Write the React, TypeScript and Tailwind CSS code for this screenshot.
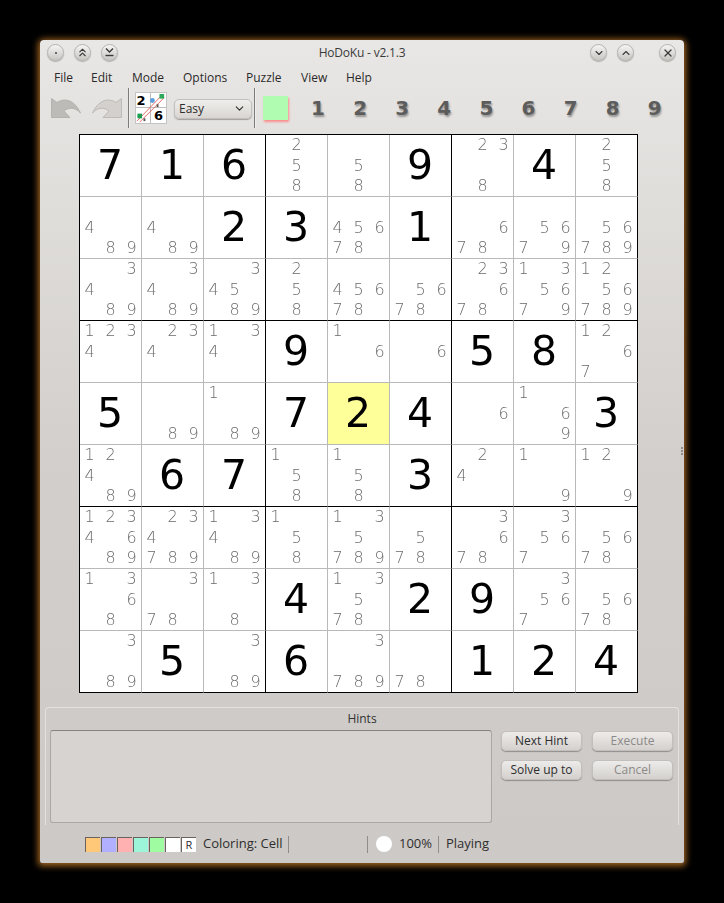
import { ChevronDown, ChevronUp, ChevronsUp, X } from "lucide-react";

const board: (number | number[])[][] = [
  [7, 1, 6, [2, 5, 8], [5, 8], 9, [2, 3, 8], 4, [2, 5, 8]],
  [[4, 8, 9], [4, 8, 9], 2, 3, [4, 5, 6, 7, 8], 1, [6, 7, 8], [5, 6, 7, 9], [5, 6, 7, 8, 9]],
  [[3, 4, 8, 9], [3, 4, 8, 9], [3, 4, 5, 8, 9], [2, 5, 8], [4, 5, 6, 7, 8], [5, 6, 7, 8], [2, 3, 6, 7, 8], [1, 3, 5, 6, 7, 9], [1, 2, 5, 6, 7, 8, 9]],
  [[1, 2, 3, 4], [2, 3, 4], [1, 3, 4], 9, [1, 6], [6], 5, 8, [1, 2, 6, 7]],
  [5, [8, 9], [1, 8, 9], 7, 2, 4, [6], [1, 6, 9], 3],
  [[1, 2, 4, 8, 9], 6, 7, [1, 5, 8], [1, 5, 8], 3, [2, 4], [1, 9], [1, 2, 9]],
  [[1, 2, 3, 4, 6, 8, 9], [2, 3, 4, 7, 8, 9], [1, 3, 4, 8, 9], [1, 5, 8], [1, 3, 5, 7, 8, 9], [5, 7, 8], [3, 6, 7, 8], [3, 5, 6, 7], [5, 6, 7, 8]],
  [[1, 3, 6, 8], [3, 7, 8], [1, 3, 8], 4, [1, 3, 5, 7, 8], 2, 9, [3, 5, 6, 7], [5, 6, 7, 8]],
  [[3, 8, 9], 5, [3, 8, 9], 6, [3, 7, 8, 9], [7, 8], 1, 2, 4],
];

const digits = [1, 2, 3, 4, 5, 6, 7, 8, 9];
const menus = [
  { label: "File", w: "w-[37px]" },
  { label: "Edit", w: "w-[41px]" },
  { label: "Mode", w: "w-[51px]" },
  { label: "Options", w: "w-[63px]" },
  { label: "Puzzle", w: "w-[55px]" },
  { label: "View", w: "w-[45px]" },
  { label: "Help", w: "w-[40px]" },
];
const swatches = ["bg-[#ffc878]", "bg-[#b0b0ff]", "bg-[#ffb0b0]", "bg-[#9cf5d8]", "bg-[#a0fca0]", "bg-white"];

function TitleButton({ children }: { children?: React.ReactNode }) {
  return (
    <div className="w-[17px] h-[17px] rounded-full flex items-center justify-center bg-gradient-to-b from-[#f6f5f4] to-[#c9c6c3] border border-[#b5b2af] shadow-[0_1px_1px_rgba(0,0,0,0.25)] text-[#3a3a3a]">
      {children}
    </div>
  );
}

function ArrowIcon({ flip }: { flip?: boolean }) {
  return (
    <svg width="30" height="20" viewBox="0 0 30 20" className={flip ? "-scale-x-100" : ""}>
      <path
        d="M0.5 0.5 L6 4.5 C11 1 22 -1 29.5 15 C24 9 18 9 13 13 L19 19.5 L0.5 19.5 Z"
        fill={flip ? "#d3d0cd" : "#bdbbb8"}
        stroke={flip ? "#bdbab7" : "#b5b3b0"}
        strokeWidth="1"
      />
    </svg>
  );
}

function LogoIcon() {
  return (
    <div className="relative w-8 h-8 bg-white grid grid-cols-2 grid-rows-2 border border-[#c4c4c4] shrink-0">
      <span className="flex items-center justify-center text-[13px] font-bold leading-none font-['DejaVu_Sans',sans-serif] text-black border-r border-b border-[#bdbdbd] pr-1">2</span>
      <span className="border-b border-[#bdbdbd]" />
      <span className="border-r border-[#bdbdbd]" />
      <span className="flex items-center justify-center text-[13px] font-bold leading-none font-['DejaVu_Sans',sans-serif] text-black">6</span>
      <svg viewBox="0 0 32 32" className="absolute inset-0 w-full h-full">
        <path d="M1 30 L27 3 M4 31 L30 5" stroke="#e0554f" strokeWidth="0.9" />
        <rect x="25" y="1" width="5" height="5" fill="#2ea85a" />
        <circle cx="17.5" cy="8" r="2.6" fill="#5a9fe0" />
        <rect x="1.5" y="22" width="5" height="5" fill="#1c9c50" />
        <rect x="22" y="12" width="2" height="3" fill="#555" />
        <rect x="8" y="27" width="2" height="3" fill="#555" />
      </svg>
    </div>
  );
}

function Separator() {
  return <div className="w-px h-10 bg-[#7d7a78] border-r border-[#eeeeee] box-content shrink-0" />;
}

function PushButton({ label, disabled }: { label: string; disabled?: boolean }) {
  return (
    <button className={`w-[81px] h-5 rounded-[5px] text-xs leading-none bg-gradient-to-b from-[#eeecea] to-[#d3d0cd] border border-[#c2bfbc] shadow-[0_1px_1px_rgba(0,0,0,0.3)] ${disabled ? "text-[#8c8a88]" : "text-[#2e2e2e]"}`}>
      {label}
    </button>
  );
}

function Cell({ value, row, col }: { value: number | number[]; row: number; col: number }) {
  const right = col % 3 === 2 ? "border-r-black" : "border-r-[#b9b9b9]";
  const bottom = row % 3 === 2 ? "border-b-black" : "border-b-[#b9b9b9]";
  const bg = row === 4 && col === 4 ? "bg-[#ffff99]" : "bg-white";
  return (
    <div className={`border-r border-b ${right} ${bottom} ${bg} min-w-0 min-h-0 overflow-hidden`}>
      {typeof value === "number" ? (
        <div className="h-full flex items-center justify-center pr-[1px] text-[41px] leading-none text-black will-change-transform">{value}</div>
      ) : (
        <div className="h-full grid grid-cols-[repeat(3,21px)] grid-rows-[repeat(3,20.5px)] justify-center content-center text-base font-extralight leading-none text-[#6a6a6a] will-change-transform">
          {digits.map((d) => (
            <span key={d} className="flex items-center justify-center">
              {value.includes(d) ? d : ""}
            </span>
          ))}
        </div>
      )}
    </div>
  );
}

export default function App() {
  return (
    <div className="w-[724px] h-[903px] bg-black pt-10 pl-10 font-['Open_Sans','Noto_Sans',sans-serif]">
      <div className="relative w-[644px] h-[823px] rounded-t-[4px] rounded-b-[2px] flex flex-col bg-gradient-to-b from-[#e9e7e5] via-[#d2cfcc] to-[#cdc9c6] shadow-[0_1px_6px_2px_rgba(214,134,44,0.75)]">
        {/* title bar */}
        <div className="h-[25px] flex items-center pl-[7px] pr-2 shrink-0">
          <div className="flex gap-2.5">
            <TitleButton>
              <span className="w-[2px] h-[2px] rounded-full bg-[#444]" />
            </TitleButton>
            <TitleButton>
              <ChevronsUp size={13} strokeWidth={2} />
            </TitleButton>
            <TitleButton>
              <svg width="11" height="11" viewBox="0 0 11 11" fill="none" stroke="currentColor" strokeWidth="1.4">
                <path d="M2 1.5 L5.5 5 L9 1.5" />
                <path d="M1.5 8.5 H9.5" />
              </svg>
            </TitleButton>
          </div>
          <div className="flex-1 text-center text-xs tracking-[-0.2px] text-[#3a3a3a] pl-[16px]">HoDoKu - v2.1.3</div>
          <div className="flex items-center">
            <TitleButton>
              <ChevronDown size={12} strokeWidth={2.2} />
            </TitleButton>
            <div className="w-2.5" />
            <TitleButton>
              <ChevronUp size={12} strokeWidth={2.2} />
            </TitleButton>
            <div className="w-[25px]" />
            <TitleButton>
              <X size={12} strokeWidth={2.4} />
            </TitleButton>
          </div>
        </div>

        {/* menu bar */}
        <div className="h-[23px] flex items-center pl-[14px] pt-[2px] text-xs text-[#2a2a2a] shrink-0">
          {menus.map((m) => (
            <span key={m.label} className={m.w}>
              {m.label}
            </span>
          ))}
        </div>

        {/* toolbar */}
        <div className="h-10 flex items-center pl-[11px] shrink-0">
          <ArrowIcon />
          <div className="w-[11px]" />
          <ArrowIcon flip />
          <div className="w-[6px]" />
          <Separator />
          <div className="w-[5px]" />
          <LogoIcon />
          <div className="w-[7px]" />
          <div className="w-[78px] h-5 mt-[1px] rounded-[5px] pl-1 pr-[5px] flex items-center justify-between text-xs text-[#2e2e2e] bg-gradient-to-b from-[#f0eeec] to-[#d8d5d2] border border-[#c2bfbc] shadow-[0_1px_1px_rgba(0,0,0,0.3)] shrink-0">
            Easy
            <ChevronDown size={13} strokeWidth={2} />
          </div>
          <div className="w-[2px]" />
          <Separator />
          <div className="w-[7px]" />
          <div className="w-[25px] h-6 bg-[#b0fcb0] shadow-[1px_2px_2px_rgba(255,120,120,0.8)] shrink-0" />
          <div className="flex ml-[9px]">
            {digits.map((d) => (
              <span
                key={d}
                className="w-[42.1px] text-center text-xl leading-none font-bold font-['DejaVu_Sans',sans-serif] text-[#5c5c5c] [text-shadow:1px_2px_2px_rgba(0,0,0,0.35)]"
              >
                {d}
              </span>
            ))}
          </div>
        </div>

        {/* board */}
        <div className="pl-[39px] pt-[6px] shrink-0">
          <div className="w-[559px] h-[559px] border-l border-t border-black grid grid-cols-[repeat(9,62px)] grid-rows-[repeat(9,62px)] font-['DejaVu_Sans',sans-serif]">
            {board.map((r, i) => r.map((v, j) => <Cell key={`${i}-${j}`} value={v} row={i} col={j} />))}
          </div>
        </div>

        {/* hints */}
        <div className="mt-[14px] mx-[5px] h-[118px] rounded-t-[4px] border-t border-x border-[#e4e2e0] flex flex-col shrink-0">
          <div className="h-[22px] flex items-center justify-center text-xs text-[#333]">Hints</div>
          <div className="flex pl-1">
            <div className="w-[442px] h-[93px] rounded-[3px] bg-[#d6d3d0] border border-[#aaa7a4] border-t-[#85827f] shrink-0" />
            <div className="grid grid-cols-2 gap-x-[10px] gap-y-[9px] ml-[9px] content-start pt-[1px]">
              <PushButton label="Next Hint" />
              <PushButton label="Execute" disabled />
              <PushButton label="Solve up to" />
              <PushButton label="Cancel" disabled />
            </div>
          </div>
        </div>

        {/* status bar */}
        <div className="flex-1 flex items-center pl-[45px] text-[13px] text-[#2e2e2e]">
          <div className="flex gap-px">
            {swatches.map((c) => (
              <div key={c} className={`w-[15px] h-[15px] ${c} border-l border-t border-[#6a625c]`} />
            ))}
            <div className="w-[15px] h-[15px] bg-white border-l border-t border-[#6a625c] text-[11px] leading-[13px] text-center">R</div>
          </div>
          <span className="ml-[7px] w-[85px]">Coloring: Cell</span>
          <div className="w-px h-[17px] bg-[#8f8c89]" />
          <div className="w-[78px]" />
          <div className="w-px h-[17px] bg-[#8f8c89]" />
          <div className="ml-2 w-4 h-4 rounded-full bg-white" />
          <span className="ml-[7px] w-[39px]">100%</span>
          <div className="w-px h-[17px] bg-[#8f8c89]" />
          <span className="ml-[7px]">Playing</span>
        </div>

        {/* splitter grip on the right edge */}
        <div className="absolute right-[1px] top-[407px] flex flex-col gap-px">
          <span className="w-[2px] h-[2px] bg-[#8f8c89]" />
          <span className="w-[2px] h-[2px] bg-[#8f8c89]" />
          <span className="w-[2px] h-[2px] bg-[#8f8c89]" />
        </div>
      </div>
    </div>
  );
}
